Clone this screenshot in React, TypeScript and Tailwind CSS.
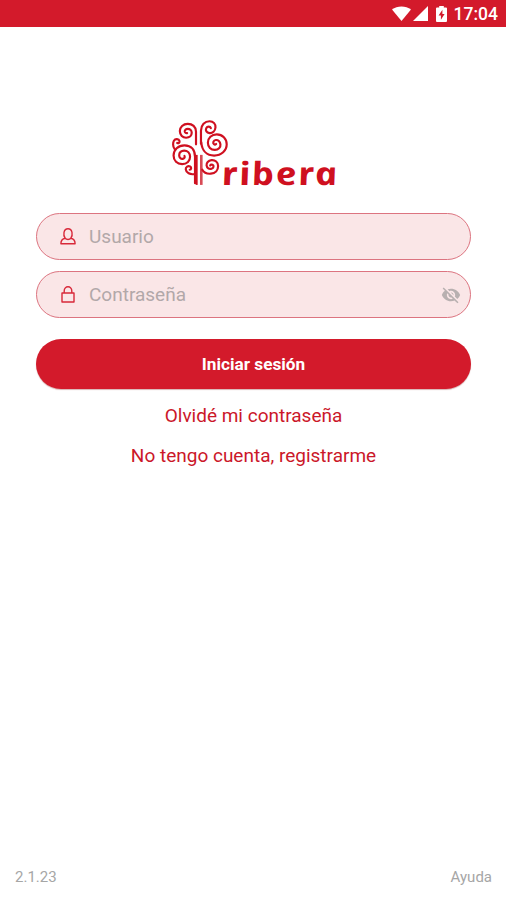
import { useState } from 'react';

const links = ['Olvidé mi contraseña', 'No tengo cuenta, registrarme'];

function Logo() {
  return (
    <svg className="overflow-visible" width="170" height="74" viewBox="168 116 170 74" role="img" aria-label="ribera">
      <g transform="translate(159.700 110) scale(0.33)" fill="none" stroke="#cf1020" strokeWidth="6.6" strokeLinecap="round">
        {/* left branches */}
        <path d="M107 104V66C107 50 96 42 82 42C68 42 58 52 58 64C58 76 67 84 77 84C88 84 94 77 94 69C94 61 88 57 82 57C76 57 72 61 73 66C74 69 77 71 80 70" />
        <path d="M104 222V142C104 121 93 107 72 107C53 107 39 120 39 138C39 154 50 164 65 164C80 164 89 154 89 142C89 130 81 123 71 123C62 123 56 129 56 137C56 144 61 149 67 148C72 147 74 143 72 139" />
        <path d="M42 118C36 110 37 98 40 93C44 86 55 87 57 94C58 99 54 102 50 100" />
        <path d="M103 194C89 197 77 190 76 180C75 172 83 168 89 171C94 174 93 181 88 181" />
        {/* right branches */}
        <path d="M122 102V63C122 45 134 34 148 34C160 34 167 43 166 53C165 64 157 71 148 70C139 69 135 62 138 55C141 49 150 49 152 55" />
        <path d="M123 98C125 123 140 138 162 138C184 138 200 123 200 104C200 87 187 74 170 74C154 74 143 85 143 99C143 112 152 121 164 121C175 121 182 113 181 104C180 95 174 90 167 91C160 92 157 99 161 103C163 105 166 105 168 103" />
        <path d="M123 136V227" stroke="#d84a55" strokeWidth="8" strokeLinecap="butt" />
        <path d="M126 181C131 190 141 194 152 193C166 192 174 182 174 170C174 158 165 151 154 152C144 153 138 160 139 168C140 176 147 180 154 178C161 176 162 168 157 166C154 165 151 166 150 168" />
        <path d="M109 136V227" strokeWidth="6" strokeLinecap="butt" />
      </g>
      {/* upright single-storey letters: the italic cut with its slant taken out */}
      <text
        transform="translate(222.500 185) skewX(12)"
        x="0"
        y="0"
        fill="#cf1020"
        fontFamily="'Noto Sans', sans-serif"
        fontSize="32"
        fontStyle="italic"
        fontWeight="700"
        letterSpacing="1.2"
        textLength="117"
        lengthAdjust="spacingAndGlyphs"
      >
        ribera
      </text>
    </svg>
  );
}

function StatusBar() {
  return (
    <div className="flex h-[27px] items-center justify-end bg-[#d31a2b] pr-2 text-white">
      <svg width="19" height="15" viewBox="0 0 20 15" preserveAspectRatio="none" fill="currentColor">
        <path d="M0 3.6C5.500-.7 14.500-.7 20 3.6L10 15Z" />
      </svg>
      <svg className="ml-0.5" width="15" height="15" viewBox="0 0 15 15" fill="currentColor">
        <path d="M15 0v15H0Z" />
      </svg>
      <svg className="ml-2" width="11" height="16" viewBox="0 0 11 16" fill="currentColor">
        <path fillRule="evenodd" d="M3.200 0h4.600v1.600H10a1 1 0 0 1 1 1V15a1 1 0 0 1-1 1H1a1 1 0 0 1-1-1V2.600a1 1 0 0 1 1-1h2.200ZM6.400 3.800 2.600 9.500h2.300v4.300l3.700-5.800H6.400Z" />
      </svg>
      <span className="ml-[7px] pt-[3px] text-[17.500px] leading-none font-medium">17:04</span>
    </div>
  );
}

function UserIcon() {
  return (
    <svg width="16" height="17" viewBox="0 0 16 17" fill="none" stroke="#d8293a" strokeWidth="1.4" strokeLinejoin="round">
      <path d="M5.200 10.300C2.800 7 3.500.8 8 .8s5.200 6.200 2.800 9.500c2.800.6 4.300 2 4.300 5.500H.9c0-3.500 1.500-4.900 4.300-5.500ZM5.200 10.300c1.300 1.600 4.300 1.600 5.600 0" />
    </svg>
  );
}

function LockIcon() {
  return (
    <svg width="16" height="17" viewBox="0 0 16 17" fill="none" stroke="#d8293a" strokeWidth="1.4" strokeLinejoin="round">
      <path d="M2 7h12v9H2ZM4.200 7V5a3.800 4.200 0 0 1 7.600 0v2" />
    </svg>
  );
}

function EyeOffIcon() {
  return (
    <svg width="20" height="20" viewBox="0 0 24 24" fill="#b8b0b0">
      <path d="M12 7c2.760 0 5 2.240 5 5 0 .65-.13 1.260-.36 1.830l2.920 2.920c1.510-1.260 2.700-2.890 3.430-4.750-1.730-4.390-6-7.500-11-7.500-1.400 0-2.740.25-3.980.7l2.160 2.160C10.740 7.130 11.350 7 12 7zM2 4.270l2.280 2.280.46.46C3.080 8.300 1.780 10.020 1 12c1.730 4.390 6 7.500 11 7.500 1.550 0 3.030-.3 4.380-.84l.42.42L19.730 22 21 20.730 3.270 3 2 4.270zM7.530 9.800l1.550 1.550c-.05.21-.08.43-.08.65 0 1.660 1.340 3 3 3 .22 0 .44-.03.65-.08l1.550 1.550c-.67.33-1.410.53-2.200.53-2.760 0-5-2.240-5-5 0-.79.2-1.530.53-2.200zm4.310-.78l3.150 3.150.02-.16c0-1.660-1.340-3-3-3l-.17.01z" />
    </svg>
  );
}

const fieldClass = 'flex h-[47px] items-center rounded-full border-[1.5px] border-[#dc7480] bg-[#fae6e7] pr-[9px] pl-[23px]';
const inputClass = 'ml-[13px] min-w-0 flex-1 bg-transparent pt-0.5 text-[19px] text-gray-700 outline-none placeholder:text-[#b2a8a9]';

export default function App() {
  const [showPassword, setShowPassword] = useState(false);

  return (
    <div className="flex h-[900px] w-full flex-col bg-white font-['Roboto',sans-serif]">
      <StatusBar />

      <main className="flex flex-1 flex-col pr-[35px] pl-9 pt-[89px]">
        <div className="flex justify-center">
          <Logo />
        </div>

        <form className="mt-[23px] flex flex-col" onSubmit={e => e.preventDefault()}>
          <label className={fieldClass}>
            <UserIcon />
            <input type="text" placeholder="Usuario" className={inputClass} />
          </label>
          <label className={`${fieldClass} mt-[11px]`}>
            <LockIcon />
            <input type={showPassword ? 'text' : 'password'} placeholder="Contraseña" className={inputClass} />
            <button type="button" onClick={() => setShowPassword(!showPassword)}>
              <EyeOffIcon />
            </button>
          </label>
          <button type="submit" className="mt-[21px] h-[50px] rounded-full bg-[#d31a2b] pt-0.5 text-[17.200px] font-bold text-white shadow-[0_1px_1px_#d8b4b4]">
            Iniciar sesión
          </button>
        </form>

        <div className="mt-[7px] flex flex-col items-center text-[19px] text-[#cb1729]">
          {links.map(link => (
            <a key={link} href="#" className="flex h-10 items-center">{link}</a>
          ))}
        </div>
      </main>

      <footer className="flex justify-between pr-3.5 pb-[13px] pl-[15px] text-[15px] leading-5 text-[#a6a6a6]">
        <span>2.1.23</span>
        <a href="#">Ayuda</a>
      </footer>
    </div>
  );
}
